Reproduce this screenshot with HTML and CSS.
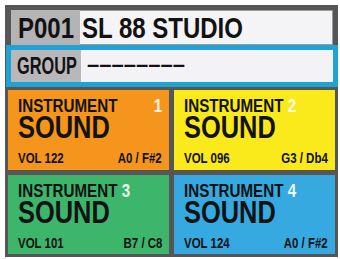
FILE: index.html
```html
<!DOCTYPE html>
<html>
<head>
<meta charset="utf-8">
<link rel="stylesheet" href="styles.css">
</head>
<body>
<div class="frame">
  <div class="header">
    <div class="prog"><span class="n">P001</span></div>
    <div class="title"><span class="n">SL 88 STUDIO</span></div>
  </div>
  <div class="group">
    <div class="glabel"><span class="n">GROUP</span></div>
    <div class="gval">––––––––</div>
  </div>
  <div class="grid">
    <div class="cell orange">
      <div class="top"><span class="n">INSTRUMENT</span><span class="n r num">1</span></div>
      <div class="sound"><span class="n">SOUND</span></div>
      <div class="bottom"><span class="n">VOL 122</span><span class="n r">A0 / F#2</span></div>
    </div>
    <div class="cell yellow">
      <div class="top"><span class="n">INSTRUMENT <span class="num">2</span></span></div>
      <div class="sound"><span class="n">SOUND</span></div>
      <div class="bottom"><span class="n">VOL 096</span><span class="n r">G3 / Db4</span></div>
    </div>
    <div class="cell green">
      <div class="top"><span class="n">INSTRUMENT <span class="num">3</span></span></div>
      <div class="sound"><span class="n">SOUND</span></div>
      <div class="bottom"><span class="n">VOL 101</span><span class="n r">B7 / C8</span></div>
    </div>
    <div class="cell blue">
      <div class="top"><span class="n">INSTRUMENT <span class="num">4</span></span></div>
      <div class="sound"><span class="n">SOUND</span></div>
      <div class="bottom"><span class="n">VOL 124</span><span class="n r">A0 / F#2</span></div>
    </div>
  </div>
</div>
</body>
</html>
```

FILE: styles.css
```css
html, body {
  margin: 0;
  padding: 0;
  background: #ffffff;
}
body {
  font-family: "Liberation Sans", Arial, sans-serif;
  font-weight: bold;
  color: #121212;
}
.n {
  display: inline-block;
  white-space: nowrap;
  transform: scaleX(0.82);
  transform-origin: left center;
}
.n.r {
  transform-origin: right center;
}
.frame {
  width: 333px;
  height: 252px;
  margin: 5px 0 0 5px;
  background: #565656;
  display: flex;
  flex-direction: column;
}
.header {
  height: 35px;
  margin: 5px 5px 0 6px;
  display: flex;
  background: #f4f4f7;
  box-shadow: inset 0 0 0 1px #9c9c9c;
}
.prog {
  width: 62px;
  padding-left: 7px;
  background: #b4b4b6;
  font-size: 30px;
  line-height: 35px;
}
.title {
  padding-left: 2px;
  font-size: 30px;
  line-height: 35px;
}
.prog .n, .title .n {
  transform: scaleX(0.8);
}
.group {
  height: 32px;
  margin: 0 0 0 1px;
  border: 5px solid #1fa3d5;
  background: #f3f3f6;
  display: flex;
  align-items: stretch;
}
.glabel {
  width: 64px;
  padding-left: 6px;
  background: #b8b8ba;
  font-size: 24px;
  line-height: 32px;
}
.glabel .n {
  transform: scaleX(0.68);
}
.gval {
  padding-left: 6px;
  font-size: 22px;
  line-height: 30px;
}
.grid {
  flex: 1;
  padding: 3px;
  display: grid;
  grid-template-columns: 1fr 1fr;
  grid-template-rows: 1fr 1fr;
  gap: 5px;
}
.cell {
  padding: 7px 7px 0 10px;
  display: flex;
  flex-direction: column;
}
.orange { background: #f5951c; }
.yellow { background: #fae91b; }
.green { background: #3db66c; }
.blue { background: #36a9e1; }
.top {
  display: flex;
  justify-content: space-between;
  font-size: 18.5px;
  line-height: 18px;
}
.num {
  color: rgba(255, 255, 255, 0.92);
}
.sound {
  font-size: 31px;
  line-height: 32px;
  margin-top: -3px;
}
.bottom {
  display: flex;
  justify-content: space-between;
  font-size: 14px;
  line-height: 14px;
  margin-top: 7px;
}
```
